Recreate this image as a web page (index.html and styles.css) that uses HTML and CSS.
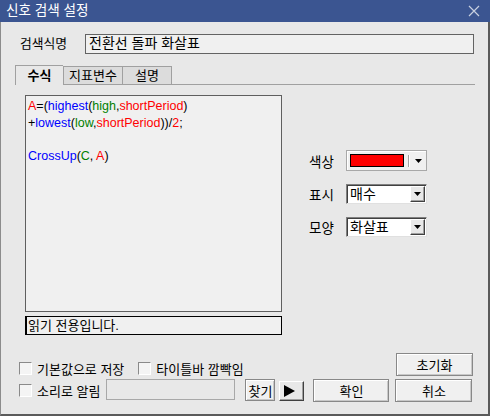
FILE: index.html
```html
<!DOCTYPE html>
<html lang="ko">
<head>
<meta charset="utf-8">
<link rel="stylesheet" href="styles.css">
</head>
<body>
<div class="window">
  <div class="titlebar">
    <span class="title">신호 검색 설정</span>
    <svg class="close" width="12" height="12" viewBox="0 0 12 12"><path d="M1 1 L11 11 M11 1 L1 11" stroke="#c8d0e0" stroke-width="1.2" fill="none"/></svg>
  </div>
  <div class="name-row">
    <span class="name-label">검색식명</span>
    <div class="name-input">전환선 돌파 화살표</div>
  </div>
  <div class="tabs">
    <div class="tab active">수식</div>
    <div class="tab">지표변수</div>
    <div class="tab">설명</div>
  </div>
  <div class="main">
    <div class="left-col">
      <div class="editor">
        <div class="line"><span class="r">A</span>=(<span class="b">highest</span>(<span class="g">high</span>,<span class="r">shortPeriod</span>)</div>
        <div class="line">+<span class="b">lowest</span>(<span class="g">low</span>,<span class="r">shortPeriod</span>))/<span class="r">2</span>;</div>
        <div class="line">&nbsp;</div>
        <div class="line"><span class="b">CrossUp</span>(<span class="g">C</span>, <span class="r">A</span>)</div>
      </div>
      <div class="readonly">읽기 전용입니다.</div>
    </div>
    <div class="right-col">
      <div class="ctl-row">
        <span class="ctl-label">색상</span>
        <div class="colorpick">
          <span class="swatch"></span>
          <span class="sep"></span>
          <span class="arrow-plain"><svg width="7" height="4" viewBox="0 0 7 4"><path d="M0 0 H7 L3.5 4 Z" fill="#000"/></svg></span>
        </div>
      </div>
      <div class="ctl-row">
        <span class="ctl-label">표시</span>
        <div class="select"><span class="sel-text">매수</span><span class="sel-btn"><svg width="7" height="4" viewBox="0 0 7 4"><path d="M0 0 H7 L3.5 4 Z" fill="#000"/></svg></span></div>
      </div>
      <div class="ctl-row">
        <span class="ctl-label">모양</span>
        <div class="select"><span class="sel-text">화살표</span><span class="sel-btn"><svg width="7" height="4" viewBox="0 0 7 4"><path d="M0 0 H7 L3.5 4 Z" fill="#000"/></svg></span></div>
      </div>
    </div>
  </div>
  <div class="bottom-row1">
    <div class="checks">
      <label class="check"><span class="box"></span>기본값으로 저장</label>
      <label class="check second"><span class="box"></span>타이틀바 깜빡임</label>
    </div>
    <button class="btn wide">초기화</button>
  </div>
  <div class="bottom-row2">
    <label class="check"><span class="box"></span>소리로 알림</label>
    <div class="sound-input"></div>
    <button class="btn find">찾기</button>
    <button class="btn play"><svg width="11" height="12" viewBox="0 0 11 12"><path d="M0 0 L11 6 L0 12 Z" fill="#000"/></svg></button>
    <button class="btn ok">확인</button>
    <button class="btn wide">취소</button>
  </div>
</div>
</body>
</html>
```

FILE: styles.css
```css
html, body {
  margin: 0;
  padding: 0;
  width: 490px;
  height: 416px;
  overflow: hidden;
  background: #e8e8e8;
}
body {
  font-family: "Liberation Sans", "Noto Sans CJK KR", sans-serif;
  font-size: 12px;
  color: #000;
}
.window {
  box-sizing: border-box;
  width: 490px;
  height: 416px;
  background: #e8e8e8;
  border-left: 1px solid #8c8c8c;
  border-right: 2px solid #5a5a5a;
  border-bottom: 2px solid #5a5a5a;
}
.titlebar {
  height: 22px;
  margin-left: -1px;
  margin-right: -2px;
  background: #3b5591;
  display: flex;
  align-items: center;
  justify-content: space-between;
  padding: 0 10px 0 6px;
  color: #fff;
}
.title {
  font-size: 13.6px;
  line-height: 22px;
}
.close {
  display: block;
}
.name-row {
  display: flex;
  align-items: center;
  margin-top: 12px;
  height: 20px;
  padding-left: 19px;
}
.name-label {
  width: 65px;
  line-height: 20px;
  font-size: 12.8px;
}
.name-input {
  box-sizing: border-box;
  width: 389px;
  height: 20px;
  border: 1px solid #636363;
  background: #f0f0f0;
  padding-left: 3px;
  line-height: 17px;
  font-size: 14px;
}
.tabs {
  display: flex;
  align-items: flex-end;
  margin-top: 11px;
  margin-left: 14px;
  width: 460px;
  height: 20px;
  border-bottom: 1px solid #a0a0a0;
  box-sizing: border-box;
}
.tab {
  box-sizing: border-box;
  height: 18px;
  width: 60px;
  background: #dcdcdc;
  border: 1px solid #a0a0a0;
  border-bottom: none;
  text-align: center;
  line-height: 17px;
  font-size: 13px;
}
.tab.active {
  width: 48px;
  background: #e8e8e8;
  font-weight: bold;
  border-right: none;
  margin-bottom: -1px;
  height: 20px;
  line-height: 19px;
}
.tab:last-child {
  width: 49px;
  border-left: none;
}
.main {
  display: flex;
  margin-top: 10px;
  padding-left: 24px;
}
.left-col {
  width: 257px;
}
.editor {
  box-sizing: border-box;
  height: 217px;
  border: 1px solid #5f5f5f;
  background: #f0f0f0;
  padding: 2px 0 0 2px;
  font-size: 12.5px;
}
.line {
  line-height: 16.5px;
  white-space: pre;
}
.r { color: #ff0000; }
.b { color: #0000ff; }
.g { color: #008000; }
.readonly {
  box-sizing: border-box;
  margin-top: 4px;
  height: 19px;
  border: 1px solid #000;
  border-left-width: 2px;
  background: #f0f0f0;
  padding-left: 1px;
  line-height: 17px;
  font-size: 13px;
}
.right-col {
  margin-left: 27px;
  padding-top: 55px;
  display: flex;
  flex-direction: column;
  gap: 12px;
}
.ctl-row {
  display: flex;
  align-items: center;
  height: 21px;
}
.ctl-label {
  width: 37px;
  font-size: 13.5px;
}
.colorpick {
  box-sizing: border-box;
  width: 81px;
  height: 21px;
  border: 1px solid #a8a8a8;
  box-shadow: inset 1px 1px 0 #fff;
  background: #f0f0f0;
  display: flex;
  align-items: center;
  padding-left: 3px;
}
.swatch {
  box-sizing: border-box;
  width: 54px;
  height: 13px;
  background: #ff0000;
  border: 1px solid #000;
}
.sep {
  width: 1px;
  height: 12px;
  background: #a0a0a0;
  margin-left: 4px;
  border-right: 1px solid #fff;
}
.arrow-plain {
  margin-left: 5px;
  display: flex;
}
.select {
  box-sizing: border-box;
  width: 81px;
  height: 20px;
  background: #fff;
  border-top: 1px solid #808080;
  border-left: 1px solid #808080;
  border-right: 1px solid #e0e0e0;
  border-bottom: 1px solid #e0e0e0;
  box-shadow: inset 1px 1px 0 #404040;
  display: flex;
  align-items: center;
  justify-content: space-between;
  padding: 2px 1px 1px 3px;
}
.sel-text {
  font-size: 14px;
  line-height: 16px;
}
.sel-btn {
  box-sizing: border-box;
  width: 15px;
  height: 16px;
  background: #e8e8e8;
  border-top: 1px solid #fff;
  border-left: 1px solid #fff;
  border-right: 1px solid #404040;
  border-bottom: 1px solid #404040;
  box-shadow: inset -1px -1px 0 #a0a0a0;
  display: flex;
  align-items: center;
  justify-content: center;
}
.bottom-row1 {
  display: flex;
  align-items: flex-end;
  justify-content: space-between;
  margin-top: 18px;
  height: 23px;
  padding-left: 18px;
  padding-right: 15px;
}
.checks {
  display: flex;
  margin-bottom: 1px;
}
.check {
  display: flex;
  align-items: center;
  height: 13px;
  font-size: 13px;
  white-space: nowrap;
}
.check.second {
  margin-left: 14px;
}
.box {
  box-sizing: border-box;
  width: 13px;
  height: 13px;
  background: #f4f4f4;
  border-top: 1px solid #8a8a8a;
  border-left: 1px solid #8a8a8a;
  border-right: 1px solid #fff;
  border-bottom: 1px solid #fff;
  margin-right: 5px;
}
.bottom-row2 {
  display: flex;
  align-items: center;
  margin-top: 2px;
  height: 25px;
  padding-left: 18px;
}
.sound-input {
  box-sizing: border-box;
  width: 129px;
  height: 21px;
  border: 1px solid #a8a8a8;
  background: #e8e8e8;
  margin-left: 6px;
  margin-bottom: 2px;
}
.btn {
  box-sizing: border-box;
  font-family: "Liberation Sans", "Noto Sans CJK KR", sans-serif;
  font-size: 13px;
  color: #000;
  background: #f0f0f0;
  border: 1px solid #888;
  box-shadow: inset 1px 1px 0 #fff, inset -1px -1px 0 #c8c8c8;
  padding: 0;
  margin: 0;
  height: 23px;
  display: flex;
  align-items: center;
  justify-content: center;
}
.btn.wide {
  width: 77px;
}
.btn.find {
  width: 30px;
  height: 22px;
  margin-left: 10px;
  margin-bottom: 1px;
}
.btn.play {
  width: 25px;
  height: 20px;
  margin-left: 4px;
  border-color: #fff #404040 #404040 #fff;
  box-shadow: inset -1px -1px 0 #a0a0a0;
  background: #e8e8e8;
  justify-content: flex-start;
  padding-left: 4px;
}
.btn.ok {
  width: 76px;
  margin-left: 9px;
  margin-right: 6px;
}
```
